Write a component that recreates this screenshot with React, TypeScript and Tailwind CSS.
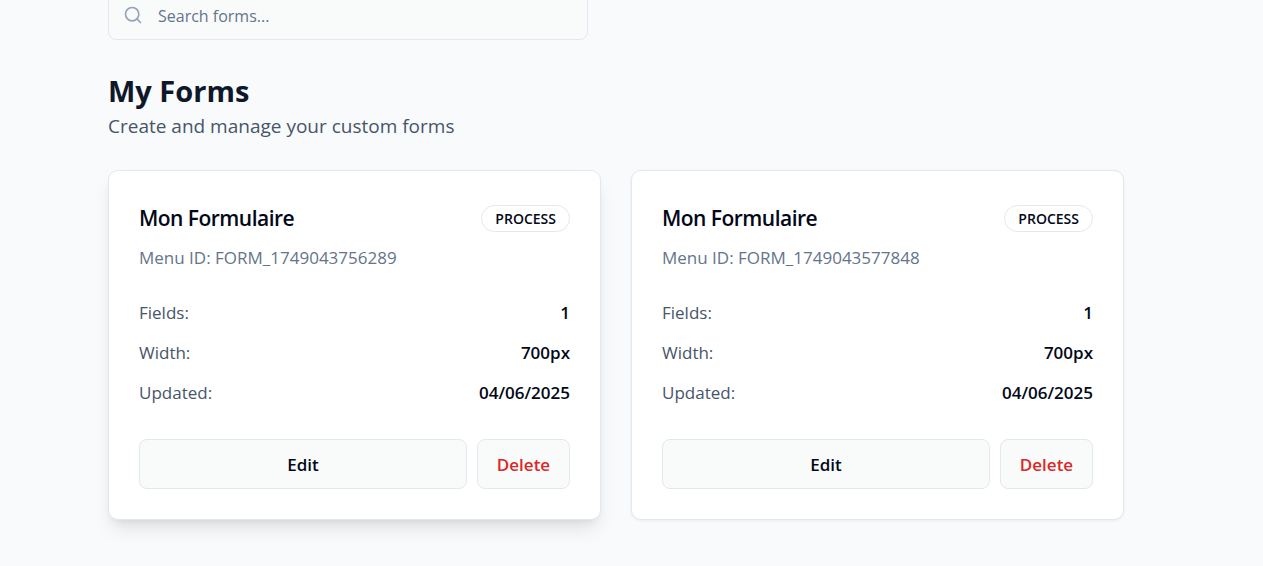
import { Search } from 'lucide-react';

type Form = {
  id: string;
  name: string;
  type: string;
  fields: number;
  width: string;
  updated: string;
  raised: boolean;
};

const forms: Form[] = [
  { id: 'FORM_1749043756289', name: 'Mon Formulaire', type: 'PROCESS', fields: 1, width: '700px', updated: '04/06/2025', raised: true },
  { id: 'FORM_1749043577848', name: 'Mon Formulaire', type: 'PROCESS', fields: 1, width: '700px', updated: '04/06/2025', raised: false },
];

function Row({ label, value }: { label: string; value: string | number }) {
  return (
    <div className="flex items-center justify-between">
      <dt className="text-[#475569]">{label}</dt>
      <dd className="font-semibold">{value}</dd>
    </div>
  );
}

function FormCard({ form }: { form: Form }) {
  const shadow = form.raised
    ? 'shadow-[0_12px_19px_-4px_rgb(0_0_0/0.1),0_5px_8px_-5px_rgb(0_0_0/0.1)]'
    : 'shadow-[0_1px_3px_rgb(0_0_0/0.06)]';
  return (
    <article className={`rounded-[10px] border border-[#e2e8f0] bg-white p-[30px] text-[17px] leading-[25px] text-[#020817] ${shadow}`}>
      <div className="flex items-center justify-between">
        <h2 className="text-[21px] leading-[35px] font-semibold tracking-tight">{form.name}</h2>
        <span className="rounded-full border border-[#e2e8f0] px-[13px] text-[14px] leading-[25px] font-semibold">{form.type}</span>
      </div>
      <p className="mt-[9px] text-[#64748b]">Menu ID: {form.id}</p>
      <dl className="mt-[30px] flex flex-col gap-[15px]">
        <Row label="Fields:" value={form.fields} />
        <Row label="Width:" value={form.width} />
        <Row label="Updated:" value={form.updated} />
      </dl>
      <div className="mt-[34px] flex gap-2.5 font-semibold">
        <button type="button" className="h-[50px] flex-1 rounded-lg border border-[#e2e8f0] bg-[#f9fbfb]">Edit</button>
        <button type="button" className="h-[50px] w-[93px] rounded-lg border border-[#e2e8f0] bg-[#f9fbfb] text-[#dc2626]">Delete</button>
      </div>
    </article>
  );
}

export default function App() {
  return (
    <div className="min-h-screen overflow-hidden bg-[#f9fafc] font-['Open_Sans',sans-serif]">
      <main className="-mt-2.5 pr-[139px] pb-10 pl-[108px]">
        <label className="flex h-[50px] max-w-[480px] items-center gap-[15px] rounded-lg border border-[#e2e8f0] bg-[#f9fbfb] px-3.5">
          <Search className="size-5 text-[#94a3b8]" aria-hidden="true" />
          <input
            type="search"
            aria-label="Search forms"
            placeholder="Search forms..."
            className="min-w-0 flex-1 bg-transparent pt-0.5 text-[16px] outline-none placeholder:text-[#64748b]"
          />
        </label>
        <h1 className="mt-[31px] text-[29px] leading-10 font-bold text-[#0f172a]">My Forms</h1>
        <p className="mt-px text-[19px] leading-7 text-[#475569]">Create and manage your custom forms</p>
        <section className="mt-[30px] grid grid-cols-2 gap-[30px]">
          {forms.map((form) => (
            <FormCard key={form.id} form={form} />
          ))}
        </section>
      </main>
    </div>
  );
}
